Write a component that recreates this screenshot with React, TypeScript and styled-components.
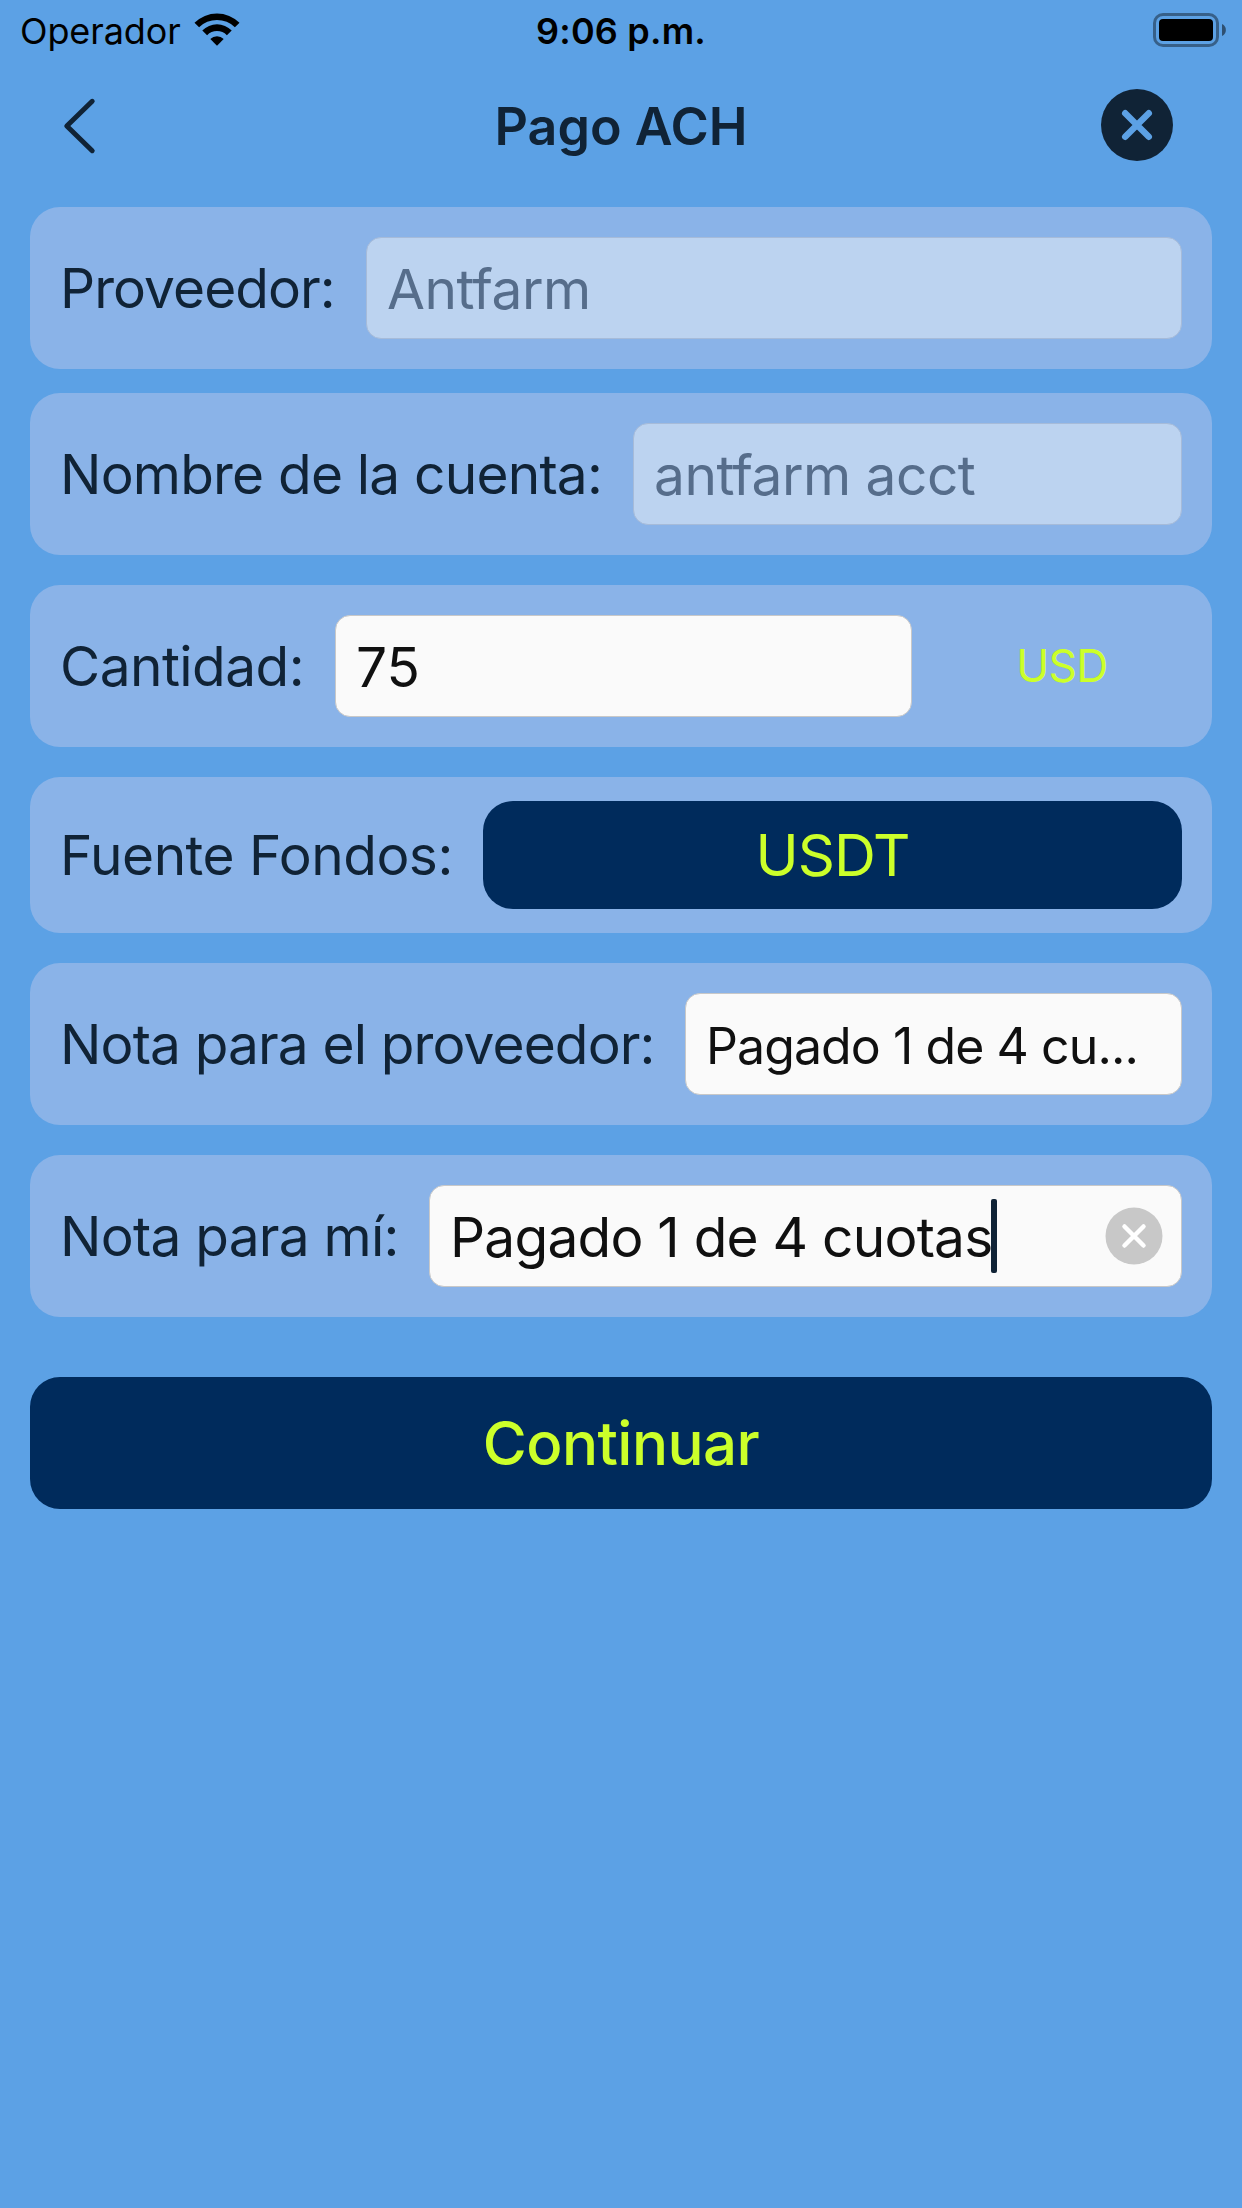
import React from "react";
import styled, { createGlobalStyle } from "styled-components";

const color = {
  sky: "#5ca1e5",
  card: "#8ab3e8",
  ink: "#102336",
  navy: "#002b5c",
  lime: "#ccff2a",
  field: "#fafafa",
  fieldLocked: "#bcd3f0",
};

const GlobalStyle = createGlobalStyle`
  * { box-sizing: border-box; }
  body {
    margin: 0;
    background: ${color.sky};
    font-family: Inter, "Liberation Sans", sans-serif;
    color: ${color.ink};
  }
`;

const Screen = styled.main`
  display: flex;
  flex-direction: column;
  width: 1242px;
  min-height: 2208px;
  background: ${color.sky};
`;

const StatusBar = styled.div`
  display: grid;
  grid-template-columns: 1fr auto 1fr;
  align-items: center;
  height: 60px;
  padding: 0 16px;
  color: #000;
  font-size: 36px;
  line-height: 58px;
`;

const Carrier = styled.div`
  display: flex;
  align-items: center;
  gap: 13px;
  padding-left: 4px;
  letter-spacing: -0.1px;
`;

const CarrierName = styled.span`
  padding-top: 2px;
`;

const Clock = styled.div`
  padding-top: 2px;
  font-weight: 600;
  letter-spacing: 0.2px;
`;

const BatteryIcon = styled.svg`
  justify-self: end;
`;

const NavBar = styled.header`
  display: grid;
  grid-template-columns: 1fr auto 1fr;
  align-items: center;
  height: 132px;
  padding: 0 60px;
`;

const IconButton = styled.button<{ $end?: boolean }>`
  display: flex;
  justify-self: ${(p) => (p.$end ? "end" : "start")};
  padding: 0;
  margin: ${(p) => (p.$end ? "0 9px 2px 0" : "0")};
  border: 0;
  background: none;
`;

const Title = styled.h1`
  margin: 0;
  padding-top: 1px;
  font-size: 52px;
  font-weight: 600;
  line-height: 64px;
`;

const Form = styled.form`
  display: flex;
  flex-direction: column;
  gap: 30px;
  padding: 15px 30px 0;
`;

const Group = styled.div`
  display: flex;
  flex-direction: column;
  gap: 24px;
`;

const Card = styled.div<{ $compact?: boolean }>`
  display: flex;
  align-items: center;
  height: ${(p) => (p.$compact ? 156 : 162)}px;
  padding: 0 30px;
  border-radius: 30px;
  background: ${color.card};
`;

const Label = styled.label<{ $width: number; $track: number }>`
  flex: 0 0 ${(p) => p.$width}px;
  font-size: 55px;
  line-height: 66px;
  letter-spacing: ${(p) => p.$track}px;
  white-space: nowrap;
`;

const Field = styled.div<{ $locked?: boolean; $small?: boolean; $track?: number }>`
  display: flex;
  flex: 1;
  align-items: center;
  min-width: 0;
  height: 102px;
  padding: ${(p) => (p.$small ? 4 : 2)}px 18px 0 20px;
  border: 1px solid ${(p) => (p.$locked ? "#a6bbd9" : "#c8c8c8")};
  border-radius: 15px;
  background: ${(p) => (p.$locked ? color.fieldLocked : color.field)};
  color: ${(p) => (p.$locked ? "#566d8b" : "#101010")};
  font-size: ${(p) => (p.$small ? 50 : 55)}px;
  letter-spacing: ${(p) => p.$track ?? 0}px;
  white-space: nowrap;
`;

const Caret = styled.span`
  flex: none;
  width: 6px;
  height: 74px;
  margin: 0 0 2px -2px;
  border-radius: 2px;
  background: ${color.ink};
`;

const ClearIcon = styled.svg`
  flex: none;
  margin: 0 0 3px auto;
`;

const Currency = styled.span`
  flex: 0 0 270px;
  padding-left: 30px;
  color: ${color.lime};
  font-size: 44.5px;
  letter-spacing: -0.8px;
  text-align: center;
`;

const SourceButton = styled.button`
  flex: 1;
  height: 108px;
  border: 0;
  border-radius: 30px;
  background: ${color.navy};
  color: ${color.lime};
  font: 400 58px Inter, sans-serif;
  letter-spacing: -1px;
`;

const SubmitButton = styled.button`
  height: 132px;
  margin-top: 30px;
  border: 0;
  border-radius: 30px;
  background: ${color.navy};
  color: ${color.lime};
  font: 500 60px Inter, sans-serif;
  letter-spacing: -0.55px;
`;

export default function App() {
  return (
    <Screen>
      <GlobalStyle />
      <StatusBar>
        <Carrier>
          <CarrierName>Operador</CarrierName>
          <svg width="46" height="34" viewBox="0 0 46 34" fill="#000">
            <path d="M0.5 9.8a32 32 0 0 1 45 0l-4.6 4.5a25.4 25.4 0 0 0-35.8 0z" />
            <path d="M8.3 17.4a20.8 20.8 0 0 1 29.4 0l-4.8 4.8a14 14 0 0 0-19.8 0z" />
            <path d="M16.3 26a9.5 9.5 0 0 1 13.4 0l-6.7 6.8z" />
          </svg>
        </Carrier>
        <Clock>9:06 p.m.</Clock>
        <BatteryIcon width="73" height="34" viewBox="0 0 73 34">
          <rect x="1.5" y="1.5" width="63" height="31" rx="8.5" fill="none" stroke="#000" strokeOpacity="0.4" strokeWidth="3" />
          <rect x="6" y="6" width="54" height="22" rx="4" />
          <path d="M69 11a6.6 6.6 0 0 1 0 12z" fillOpacity="0.5" />
        </BatteryIcon>
      </StatusBar>
      <NavBar>
        <IconButton aria-label="Atrás">
          <svg width="40" height="60" viewBox="0 0 40 60" fill="none" stroke={color.ink} strokeWidth="5" strokeLinecap="round" strokeLinejoin="round">
            <path d="M32.2 5.3 6.8 30l25.4 24.7" />
          </svg>
        </IconButton>
        <Title>Pago ACH</Title>
        <IconButton $end aria-label="Cerrar">
          <svg width="72" height="72" viewBox="0 0 72 72">
            <circle cx="36" cy="36" r="36" fill={color.ink} />
            <path d="M24.2 24.2l23.6 23.6M47.8 24.2 24.2 47.8" stroke={color.sky} strokeWidth="6.4" strokeLinecap="round" />
          </svg>
        </IconButton>
      </NavBar>
      <Form>
        <Group>
          <Card>
            <Label $width={306} $track={-0.92}>Proveedor:</Label>
            <Field $locked $track={-0.5}>Antfarm</Field>
          </Card>
          <Card>
            <Label $width={573} $track={-0.8}>Nombre de la cuenta:</Label>
            <Field $locked $track={-0.5}>antfarm acct</Field>
          </Card>
        </Group>
        <Card>
          <Label $width={275} $track={-0.55}>Cantidad:</Label>
          <Field>75</Field>
          <Currency>USD</Currency>
        </Card>
        <Card $compact>
          <Label $width={423} $track={-0.52}>Fuente Fondos:</Label>
          <SourceButton type="button">USDT</SourceButton>
        </Card>
        <Card>
          <Label $width={625} $track={-0.87}>Nota para el proveedor:</Label>
          <Field $small $track={-0.92}>Pagado 1 de 4 cu...</Field>
        </Card>
        <Card>
          <Label $width={369} $track={-0.76}>Nota para mí:</Label>
          <Field $track={-0.77}>
            <span>Pagado 1 de 4 cuotas</span>
            <Caret />
            <ClearIcon width="58" height="58" viewBox="0 0 58 58">
              <circle cx="29" cy="29" r="28.5" fill="#c8c8c8" />
              <path d="M19.5 19.5l19 19M38.5 19.5l-19 19" stroke="#fff" strokeWidth="4.5" strokeLinecap="round" />
            </ClearIcon>
          </Field>
        </Card>
        <SubmitButton type="button">Continuar</SubmitButton>
      </Form>
    </Screen>
  );
}
